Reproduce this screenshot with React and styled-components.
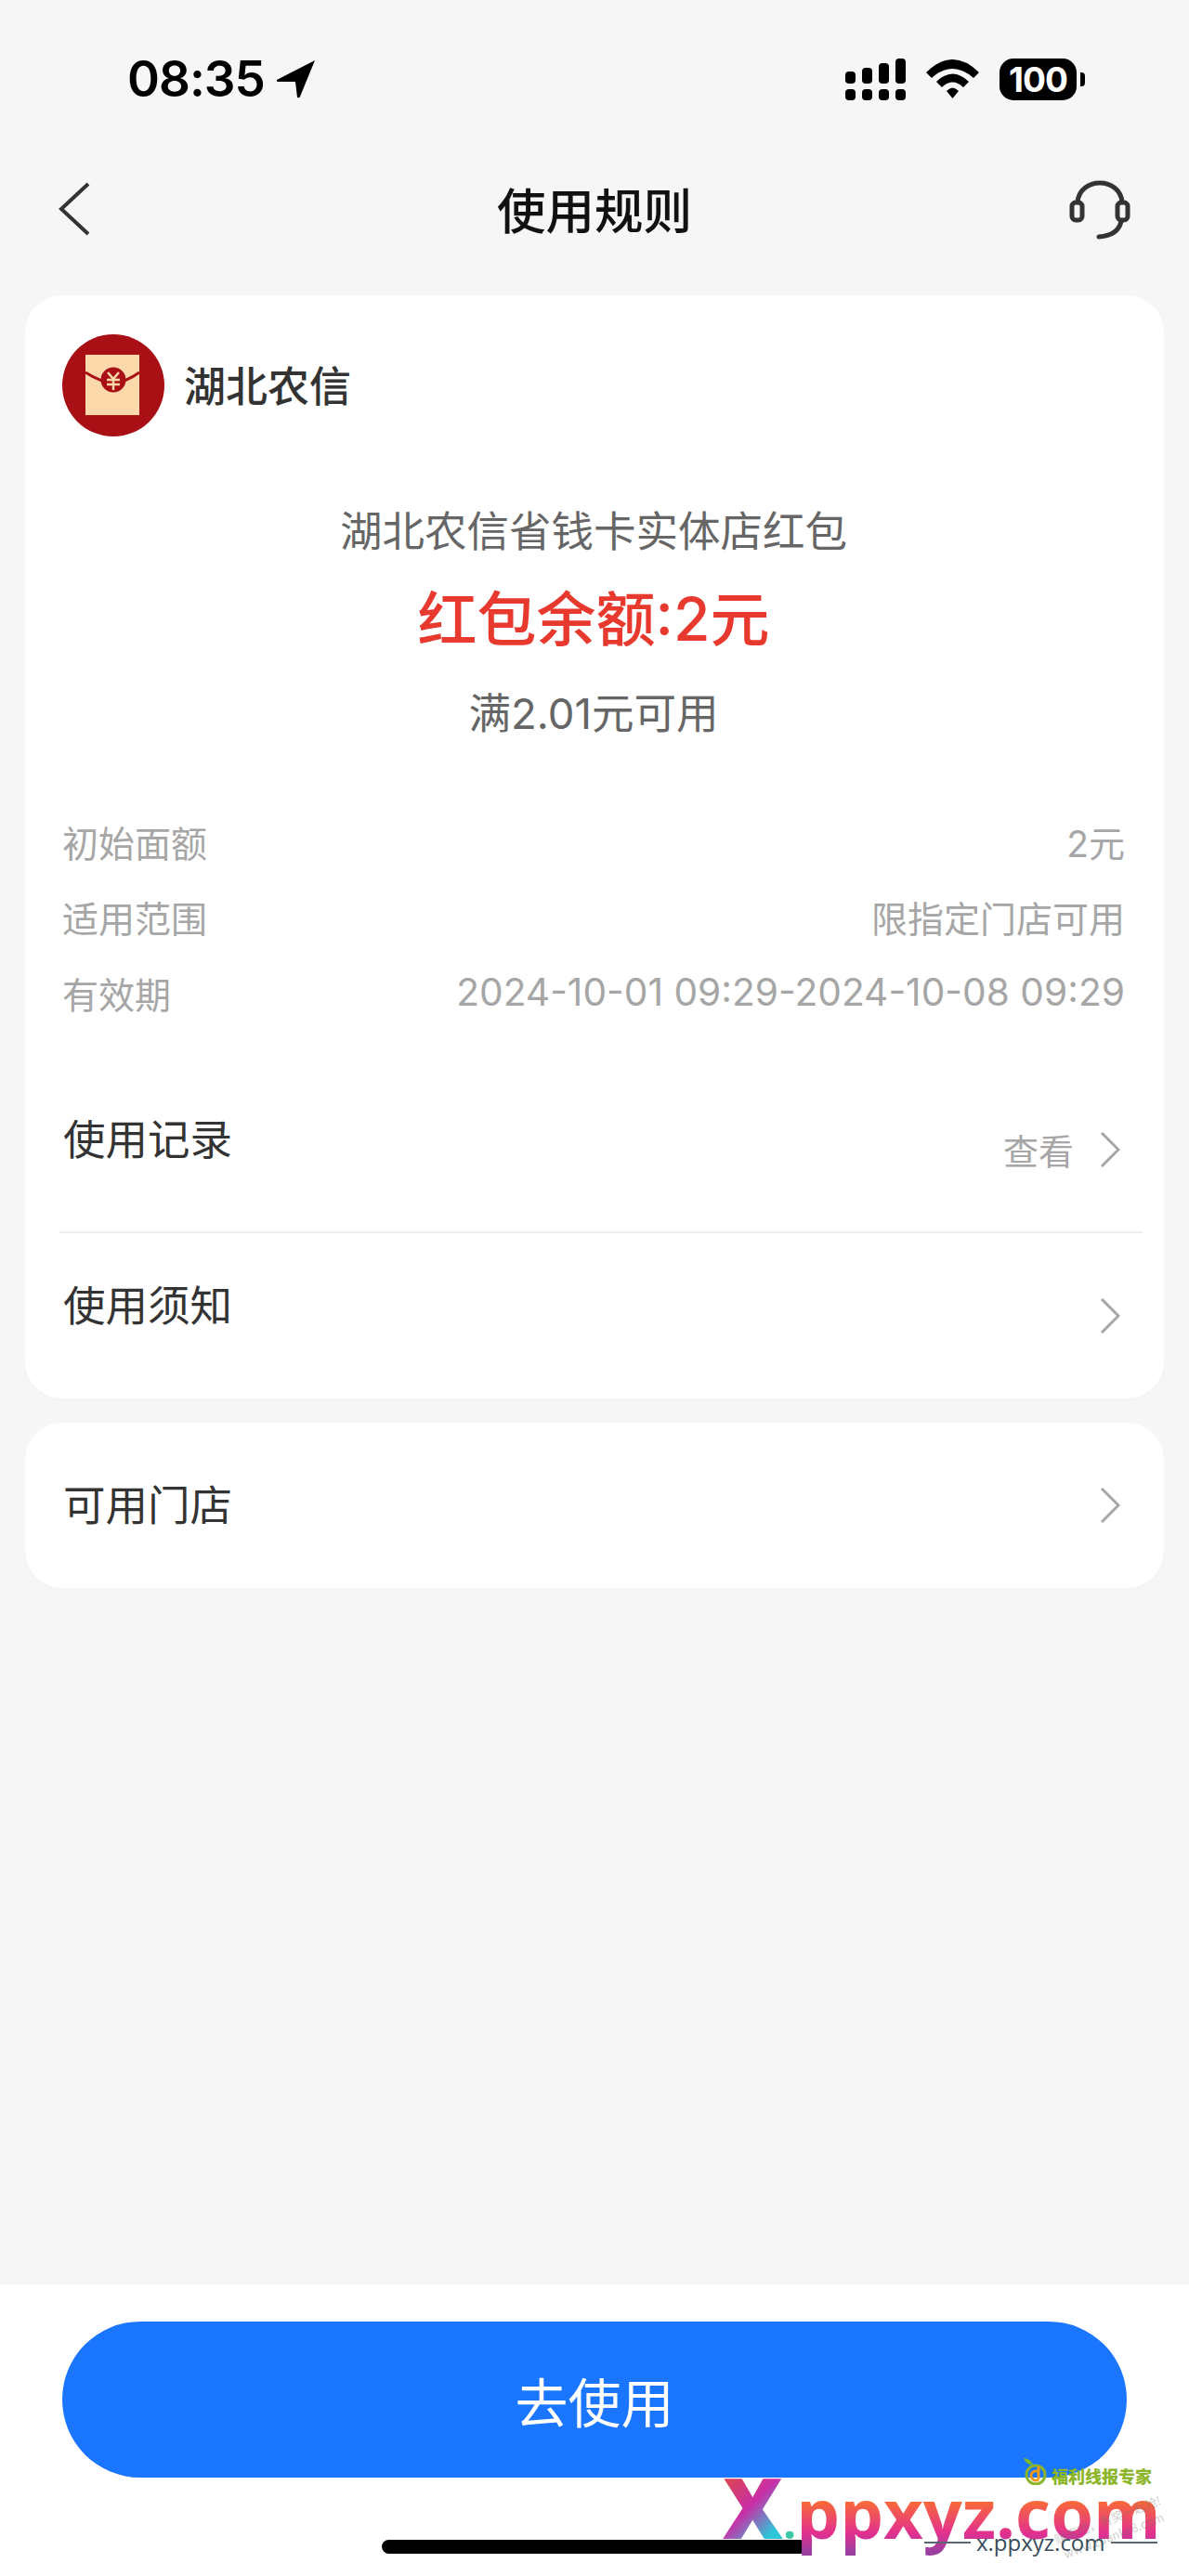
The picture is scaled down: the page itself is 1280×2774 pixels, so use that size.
import React from 'react';
import styled, { createGlobalStyle } from 'styled-components';

const GlobalStyle = createGlobalStyle`
  html, body {
    margin: 0;
    padding: 0;
    background: #f6f6f6;
    font-family: "Inter", "Noto Sans CJK SC", sans-serif;
  }
  * {
    box-sizing: border-box;
  }
`;

const Page = styled.div`
  display: flex;
  flex-direction: column;
  width: 1280px;
  height: 2774px;
  overflow: hidden;
  background: #f6f6f6;
`;

const StatusBar = styled.div`
  display: flex;
  align-items: center;
  justify-content: space-between;
  height: 170px;
  padding: 0 112px 0 137px;
`;

const TimeGroup = styled.div`
  display: flex;
  align-items: center;
  gap: 13px;
`;

const Time = styled.span`
  font-family: "Inter", sans-serif;
  font-size: 53px;
  font-weight: 600;
  line-height: 60px;
  letter-spacing: -1px;
  color: #000;
`;

const StatusIcons = styled.div`
  display: flex;
  align-items: center;
  gap: 22px;
`;

const Battery = styled.div`
  display: flex;
  align-items: center;
  gap: 4px;
`;

const BatteryBody = styled.div`
  display: flex;
  align-items: center;
  justify-content: center;
  width: 83px;
  height: 45px;
  border-radius: 15px;
  background: #000;
  color: #fff;
  font-family: "Inter", sans-serif;
  font-size: 37px;
  font-weight: 700;
  letter-spacing: -1px;
`;

const BatteryNub = styled.div`
  width: 5px;
  height: 15px;
  border-radius: 0 4px 4px 0;
  background: #000;
`;

const NavBar = styled.div`
  display: grid;
  grid-template-columns: 1fr auto 1fr;
  align-items: center;
  height: 110px;
  padding: 0 63px;
`;

const NavEnd = styled.div`
  display: flex;
  justify-content: ${(p) => (p.$right ? 'flex-end' : 'flex-start')};
`;

const NavTitle = styled.h1`
  margin: 0;
  padding-bottom: 3px;
  font-family: "Noto Sans CJK SC", sans-serif;
  font-size: 52.5px;
  font-weight: 500;
  line-height: 70px;
  color: #111;
`;

const Card = styled.section`
  margin: ${(p) => p.$top}px 27px 0;
  padding: ${(p) => (p.$padded ? '42px 42px 0 40px' : '0 42px 0 40px')};
  border-radius: 40px;
  background: #fff;
  box-shadow: 0 2px 10px rgba(0, 0, 0, 0.012);
`;

const Merchant = styled.div`
  display: flex;
  align-items: center;
  gap: 21px;
`;

const MerchantName = styled.span`
  padding-bottom: 3px;
  font-family: "Noto Sans CJK SC", sans-serif;
  font-size: 45px;
  font-weight: 500;
  line-height: 60px;
  color: #333;
`;

const Summary = styled.div`
  display: flex;
  flex-direction: column;
  align-items: center;
  margin-top: 72.5px;
`;

const CouponName = styled.div`
  font-size: 45.5px;
  line-height: 60px;
  color: #666;
`;

const Balance = styled.div`
  margin-top: 24.5px;
  font-size: 64px;
  font-weight: 500;
  line-height: 80px;
  color: #e8392f;
`;

const Threshold = styled.div`
  margin-top: 32px;
  font-size: 45.5px;
  line-height: 60px;
  color: #666;
`;

const DetailList = styled.div`
  margin-top: 66px;
`;

const DetailRow = styled.div`
  display: flex;
  align-items: center;
  justify-content: space-between;
  height: 81.5px;
  font-size: 39px;
  color: #a6a6a6;
`;

const DetailValue = styled.span`
  font-size: ${(p) => (p.$numeric ? 40.7 : 39)}px;
`;

const LinkList = styled.div`
  margin: 40px -19px 0 -3px;
`;

const LinkRow = styled.div`
  display: flex;
  align-items: center;
  justify-content: space-between;
  height: 178px;
  padding: 0 24px 0 4px;
  border-bottom: ${(p) => (p.$divided ? '2px solid #eeeeee' : '0')};
`;

const LinkLabel = styled.span`
  padding: ${(p) => (p.$raised ? '0 0 19px' : '3px 0 0')};
  font-size: 45.5px;
  line-height: 60px;
  color: #333;
`;

const LinkAction = styled.div`
  display: flex;
  align-items: center;
  gap: 28px;
  font-size: 38px;
  color: #a6a6a6;
`;

const StoreRow = styled(LinkRow)`
  margin: 0 -19px 0 -3px;
`;

const BottomBar = styled.footer`
  position: relative;
  display: flex;
  flex-direction: column;
  align-items: center;
  margin-top: auto;
  height: 314px;
  padding-top: 40px;
  background: #fff;
`;

const UseButton = styled.button`
  width: 1146px;
  height: 168px;
  border: 0;
  border-radius: 84px;
  background: #1a75ff;
  color: #fff;
  font-family: "Noto Sans CJK SC", sans-serif;
  font-size: 57px;
  line-height: 1;
`;

const HomeIndicator = styled.div`
  width: 458px;
  height: 15px;
  margin-top: 67px;
  border-radius: 8px;
  background: #000;
`;

const Watermark = styled.div`
  position: absolute;
  left: 778px;
  top: 189px;
  display: flex;
  align-items: baseline;
  font-family: "Open Sans", sans-serif;
  font-weight: 700;
  line-height: 100px;
`;

const WatermarkX = styled.span`
  font-size: 90px;
  font-weight: 800;
  background: linear-gradient(135deg, #d9415e 20%, #c92fa8 48%, #2cc6d8 80%);
  -webkit-background-clip: text;
  background-clip: text;
  color: transparent;
`;

const WatermarkDot = styled.span`
  font-size: 50px;
  color: #3bc9a8;
`;

const WatermarkDomain = styled.span`
  font-size: 74px;
  background: linear-gradient(180deg, #ff7a1e 28%, #e2308f 72%, #9a3fa0 92%);
  -webkit-background-clip: text;
  background-clip: text;
  color: transparent;
`;

const WatermarkCaption = styled.div`
  position: absolute;
  left: 995px;
  top: 262px;
  display: flex;
  align-items: center;
  gap: 6px;
  font-family: "Open Sans", sans-serif;
  font-size: 24px;
  line-height: 32px;
  color: #384c5c;

  &::before,
  &::after {
    content: '';
    width: 50px;
    height: 2px;
    background: #5a6670;
  }
`;

const Stamp = styled.div`
  position: absolute;
  left: 1100px;
  top: 186px;
  display: flex;
  align-items: flex-end;
  gap: 4px;
`;

const StampText = styled.span`
  font-family: "Noto Sans CJK SC", sans-serif;
  font-size: 18px;
  font-weight: 900;
  line-height: 20px;
  color: #8db52a;
`;

const FaintMark = styled.div`
  position: absolute;
  left: 1135px;
  top: 244px;
  font-family: "Noto Sans CJK SC", sans-serif;
  font-size: 13px;
  line-height: 18px;
  text-align: center;
  color: rgba(110, 110, 110, 0.35);
  transform: rotate(-21deg);
`;

function LocationArrow() {
  return (
    <svg width="41" height="41" viewBox="0 0 41 41">
      <path d="M41 0 L0 21 Q-1 23 2 23 L20 23 L22 40 Q24 41 25 39 Z" fill="#000" />
    </svg>
  );
}

function SignalIcon() {
  return (
    <svg width="65" height="45" viewBox="0 0 65 45" fill="#000">
      <rect x="0" y="14" width="11" height="13" rx="4" />
      <rect x="18" y="10" width="11" height="17" rx="4" />
      <rect x="36" y="5" width="11" height="22" rx="4" />
      <rect x="54" y="0" width="11" height="27" rx="4" />
      <rect x="0" y="33" width="11" height="12" rx="4" />
      <rect x="18" y="33" width="11" height="12" rx="4" />
      <rect x="36" y="33" width="11" height="12" rx="4" />
      <rect x="54" y="33" width="11" height="12" rx="4" />
    </svg>
  );
}

function WifiIcon() {
  return (
    <svg width="57" height="42" viewBox="0 0 57 42" fill="#000">
      <path d="M0 14 Q28.5 -14 57 14 L51 20 Q28.5 0 6 20 Z" />
      <path d="M11 24 Q28.5 7 46 24 L40 30 Q28.5 19 17 30 Z" />
      <path d="M22 34 Q28.5 27 35 34 L28.5 42 Z" />
    </svg>
  );
}

function BackIcon() {
  return (
    <svg width="34" height="58" viewBox="0 0 34 58" fill="none">
      <path d="M32 2 L3 29 L32 56" stroke="#333" strokeWidth="4" />
    </svg>
  );
}

function HeadsetIcon() {
  return (
    <svg width="66" height="66" viewBox="0 0 66 66" fill="none" stroke="#333" strokeWidth="5" strokeLinecap="round">
      <path d="M9 26 C11 -2 55 -2 57 26" />
      <rect x="3" y="26" width="11" height="19" rx="4" />
      <rect x="52" y="26" width="11" height="19" rx="4" />
      <path d="M56 46 C54 56 46 62 32 63" />
    </svg>
  );
}

function Chevron() {
  return (
    <svg width="22" height="38" viewBox="0 0 22 38" fill="none">
      <path d="M2 1 L20 19 L2 37" stroke="#a6a6a6" strokeWidth="3" />
    </svg>
  );
}

function RedPacketLogo() {
  return (
    <svg width="110" height="110" viewBox="0 0 110 110">
      <circle cx="55" cy="55" r="55" fill="#a81015" />
      <rect x="25" y="22" width="58" height="65" fill="#fcd9ab" />
      <path d="M25 41 Q42 52 55 52 Q68 52 83 41" fill="none" stroke="#a81015" strokeWidth="3" />
      <circle cx="55" cy="49" r="13.5" fill="#a81015" />
      <path d="M49 41 L55 48 L61 41 M55 48 V60 M48 49 H62 M48 54 H62" fill="none" stroke="#fcd9ab" strokeWidth="2.5" />
    </svg>
  );
}

function StampLogo() {
  return (
    <svg width="28" height="30" viewBox="0 0 28 30" fill="none">
      <path d="M2 1 Q10 2 12 8 Q5 9 2 1 Z" fill="#7cb82f" />
      <circle cx="15" cy="19" r="10" stroke="#8db52a" strokeWidth="3" />
      <path d="M18 10 V24 M18 24 A5 5 0 1 1 18 16" stroke="#f09a1a" strokeWidth="3" />
    </svg>
  );
}

const details = [
  { label: '初始面额', value: '2元' },
  { label: '适用范围', value: '限指定门店可用' },
  { label: '有效期', value: '2024-10-01 09:29-2024-10-08 09:29', numeric: true },
];

function App() {
  return (
    <Page>
      <GlobalStyle />
      <StatusBar>
        <TimeGroup>
          <Time>08:35</Time>
          <LocationArrow />
        </TimeGroup>
        <StatusIcons>
          <SignalIcon />
          <WifiIcon />
          <Battery>
            <BatteryBody>100</BatteryBody>
            <BatteryNub />
          </Battery>
        </StatusIcons>
      </StatusBar>

      <NavBar>
        <NavEnd>
          <BackIcon />
        </NavEnd>
        <NavTitle>使用规则</NavTitle>
        <NavEnd $right>
          <HeadsetIcon />
        </NavEnd>
      </NavBar>

      <Card $top={38} $padded>
        <Merchant>
          <RedPacketLogo />
          <MerchantName>湖北农信</MerchantName>
        </Merchant>
        <Summary>
          <CouponName>湖北农信省钱卡实体店红包</CouponName>
          <Balance>红包余额:2元</Balance>
          <Threshold>满2.01元可用</Threshold>
        </Summary>
        <DetailList>
          {details.map((item) => (
            <DetailRow key={item.label}>
              <span>{item.label}</span>
              <DetailValue $numeric={item.numeric}>{item.value}</DetailValue>
            </DetailRow>
          ))}
        </DetailList>
        <LinkList>
          <LinkRow $divided>
            <LinkLabel $raised>使用记录</LinkLabel>
            <LinkAction>
              查看
              <Chevron />
            </LinkAction>
          </LinkRow>
          <LinkRow>
            <LinkLabel $raised>使用须知</LinkLabel>
            <LinkAction>
              <Chevron />
            </LinkAction>
          </LinkRow>
        </LinkList>
      </Card>

      <Card $top={26}>
        <StoreRow>
          <LinkLabel>可用门店</LinkLabel>
          <LinkAction>
            <Chevron />
          </LinkAction>
        </StoreRow>
      </Card>

      <BottomBar>
        <UseButton type="button">去使用</UseButton>
        <HomeIndicator />
        <Watermark>
          <WatermarkX>X</WatermarkX>
          <WatermarkDot>.</WatermarkDot>
          <WatermarkDomain>ppxyz.com</WatermarkDomain>
        </Watermark>
        <WatermarkCaption>x.ppxyz.com</WatermarkCaption>
        <Stamp>
          <StampLogo />
          <StampText>福利线报专家</StampText>
        </Stamp>
        <FaintMark>
          赚客吧，有奖一起抢!
          <br />
          www.zuanke8.com
        </FaintMark>
      </BottomBar>
    </Page>
  );
}

export default App;
